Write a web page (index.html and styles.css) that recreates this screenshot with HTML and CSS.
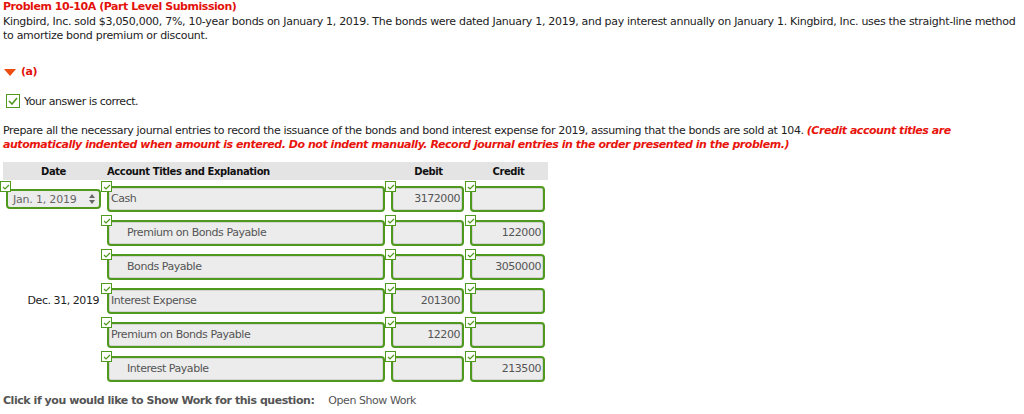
FILE: index.html
```html
<!DOCTYPE html>
<html>
<head>
<meta charset="utf-8">
<link rel="stylesheet" href="styles.css">
</head>
<body>
<div class="page">
  <h1 class="title">Problem 10-10A (Part Level Submission)</h1>
  <p class="prompt">Kingbird, Inc. sold $3,050,000, 7%, 10-year bonds on January 1, 2019. The bonds were dated January 1, 2019, and pay interest annually on January 1. Kingbird, Inc. uses the straight-line method to amortize bond premium or discount.</p>

  <div class="part"><span class="tri"></span><span class="part-label">(a)</span></div>

  <div class="correct">
    <span class="bigcheck"><svg width="10" height="8" viewBox="0 0 10 8"><path d="M1 4 L4 7 L9 1" fill="none" stroke="#4f9a1e" stroke-width="1.6"/></svg></span>
    <span>Your answer is correct.</span>
  </div>

  <p class="instr"><span class="instr-text">Prepare all the necessary journal entries to record the issuance of the bonds and bond interest expense for 2019, assuming that the bonds are sold at 104.</span> <em class="warn">(Credit account titles are automatically indented when amount is entered. Do not indent manually. Record journal entries in the order presented in the problem.)</em></p>

  <div class="thead">
    <div class="th th-date">Date</div>
    <div class="th th-acct">Account Titles and Explanation</div>
    <div class="th th-debit">Debit</div>
    <div class="th th-credit">Credit</div>
  </div>

  <div class="rows">
    <div class="row">
      <div class="cell c-date">
        <span class="badge"><svg width="8" height="6" viewBox="0 0 8 6"><path d="M1 3 L3 5 L7 1" fill="none" stroke="#4f9a1e" stroke-width="1.2"/></svg></span>
        <div class="select"><span>Jan. 1, 2019</span><span class="arrows"><svg width="6" height="10" viewBox="0 0 6 10"><path d="M0 4 L3 0 L6 4 Z M0 6 L3 10 L6 6 Z" fill="#666"/></svg></span></div>
      </div>
      <div class="cell c-acct">
        <span class="badge"><svg width="8" height="6" viewBox="0 0 8 6"><path d="M1 3 L3 5 L7 1" fill="none" stroke="#4f9a1e" stroke-width="1.2"/></svg></span>
        <div class="box acct">Cash</div>
      </div>
      <div class="cell c-debit">
        <span class="badge"><svg width="8" height="6" viewBox="0 0 8 6"><path d="M1 3 L3 5 L7 1" fill="none" stroke="#4f9a1e" stroke-width="1.2"/></svg></span>
        <div class="box num">3172000</div>
      </div>
      <div class="cell c-credit">
        <span class="badge"><svg width="8" height="6" viewBox="0 0 8 6"><path d="M1 3 L3 5 L7 1" fill="none" stroke="#4f9a1e" stroke-width="1.2"/></svg></span>
        <div class="box num"></div>
      </div>
    </div>

    <div class="row">
      <div class="cell c-date"></div>
      <div class="cell c-acct">
        <span class="badge"><svg width="8" height="6" viewBox="0 0 8 6"><path d="M1 3 L3 5 L7 1" fill="none" stroke="#4f9a1e" stroke-width="1.2"/></svg></span>
        <div class="box acct indent">Premium on Bonds Payable</div>
      </div>
      <div class="cell c-debit">
        <span class="badge"><svg width="8" height="6" viewBox="0 0 8 6"><path d="M1 3 L3 5 L7 1" fill="none" stroke="#4f9a1e" stroke-width="1.2"/></svg></span>
        <div class="box num"></div>
      </div>
      <div class="cell c-credit">
        <span class="badge"><svg width="8" height="6" viewBox="0 0 8 6"><path d="M1 3 L3 5 L7 1" fill="none" stroke="#4f9a1e" stroke-width="1.2"/></svg></span>
        <div class="box num">122000</div>
      </div>
    </div>

    <div class="row">
      <div class="cell c-date"></div>
      <div class="cell c-acct">
        <span class="badge"><svg width="8" height="6" viewBox="0 0 8 6"><path d="M1 3 L3 5 L7 1" fill="none" stroke="#4f9a1e" stroke-width="1.2"/></svg></span>
        <div class="box acct indent">Bonds Payable</div>
      </div>
      <div class="cell c-debit">
        <span class="badge"><svg width="8" height="6" viewBox="0 0 8 6"><path d="M1 3 L3 5 L7 1" fill="none" stroke="#4f9a1e" stroke-width="1.2"/></svg></span>
        <div class="box num"></div>
      </div>
      <div class="cell c-credit">
        <span class="badge"><svg width="8" height="6" viewBox="0 0 8 6"><path d="M1 3 L3 5 L7 1" fill="none" stroke="#4f9a1e" stroke-width="1.2"/></svg></span>
        <div class="box num">3050000</div>
      </div>
    </div>

    <div class="row">
      <div class="cell c-date"><div class="date-text">Dec. 31, 2019</div></div>
      <div class="cell c-acct">
        <span class="badge"><svg width="8" height="6" viewBox="0 0 8 6"><path d="M1 3 L3 5 L7 1" fill="none" stroke="#4f9a1e" stroke-width="1.2"/></svg></span>
        <div class="box acct">Interest Expense</div>
      </div>
      <div class="cell c-debit">
        <span class="badge"><svg width="8" height="6" viewBox="0 0 8 6"><path d="M1 3 L3 5 L7 1" fill="none" stroke="#4f9a1e" stroke-width="1.2"/></svg></span>
        <div class="box num">201300</div>
      </div>
      <div class="cell c-credit">
        <span class="badge"><svg width="8" height="6" viewBox="0 0 8 6"><path d="M1 3 L3 5 L7 1" fill="none" stroke="#4f9a1e" stroke-width="1.2"/></svg></span>
        <div class="box num"></div>
      </div>
    </div>

    <div class="row">
      <div class="cell c-date"></div>
      <div class="cell c-acct">
        <span class="badge"><svg width="8" height="6" viewBox="0 0 8 6"><path d="M1 3 L3 5 L7 1" fill="none" stroke="#4f9a1e" stroke-width="1.2"/></svg></span>
        <div class="box acct">Premium on Bonds Payable</div>
      </div>
      <div class="cell c-debit">
        <span class="badge"><svg width="8" height="6" viewBox="0 0 8 6"><path d="M1 3 L3 5 L7 1" fill="none" stroke="#4f9a1e" stroke-width="1.2"/></svg></span>
        <div class="box num">12200</div>
      </div>
      <div class="cell c-credit">
        <span class="badge"><svg width="8" height="6" viewBox="0 0 8 6"><path d="M1 3 L3 5 L7 1" fill="none" stroke="#4f9a1e" stroke-width="1.2"/></svg></span>
        <div class="box num"></div>
      </div>
    </div>

    <div class="row">
      <div class="cell c-date"></div>
      <div class="cell c-acct">
        <span class="badge"><svg width="8" height="6" viewBox="0 0 8 6"><path d="M1 3 L3 5 L7 1" fill="none" stroke="#4f9a1e" stroke-width="1.2"/></svg></span>
        <div class="box acct indent">Interest Payable</div>
      </div>
      <div class="cell c-debit">
        <span class="badge"><svg width="8" height="6" viewBox="0 0 8 6"><path d="M1 3 L3 5 L7 1" fill="none" stroke="#4f9a1e" stroke-width="1.2"/></svg></span>
        <div class="box num"></div>
      </div>
      <div class="cell c-credit">
        <span class="badge"><svg width="8" height="6" viewBox="0 0 8 6"><path d="M1 3 L3 5 L7 1" fill="none" stroke="#4f9a1e" stroke-width="1.2"/></svg></span>
        <div class="box num">213500</div>
      </div>
    </div>
  </div>

  <div class="footer">
    <span class="footer-label">Click if you would like to Show Work for this question:</span>
    <span class="footer-link">Open Show Work</span>
  </div>
</div>
</body>
</html>
```

FILE: styles.css
```css
html, body {
  margin: 0;
  padding: 0;
  background: #fff;
}
body {
  font-family: "DejaVu Sans", Verdana, sans-serif;
  font-size: 11px;
  letter-spacing: -0.45px;
  color: #222;
}
.page {
  width: 1020px;
  padding-left: 3px;
}
.title {
  margin: 0 0 2px 0;
  font-size: 11px;
  line-height: 13px;
  font-weight: bold;
  color: #e3120b;
}
.prompt {
  margin: 0;
  line-height: 14px;
  color: #222;
  letter-spacing: -0.3px;
}
.part {
  margin-top: 22px;
  height: 14px;
  line-height: 14px;
  display: flex;
  align-items: center;
  gap: 5px;
}
.tri {
  display: inline-block;
  width: 0;
  height: 0;
  margin-left: 1px;
  border-left: 6px solid transparent;
  border-right: 6px solid transparent;
  border-top: 7px solid #ee4b10;
}
.part-label {
  font-weight: bold;
  color: #e3120b;
}
.correct {
  margin-top: 15px;
  height: 14px;
  display: flex;
  align-items: center;
  gap: 4px;
  padding-left: 3px;
}
.bigcheck {
  width: 12px;
  height: 12px;
  border: 1px solid #4f9a1e;
  display: flex;
  align-items: center;
  justify-content: center;
  background: #fff;
}
.instr {
  margin: 16px 0 0 0;
  line-height: 14px;
  width: 975px;
}
.instr-text {
  letter-spacing: -0.36px;
}
.warn {
  color: #e8140c;
  font-weight: bold;
  font-style: italic;
}
.thead {
  margin-top: 10px;
  width: 545px;
  height: 18px;
  background: #e4e4e4;
  display: grid;
  grid-template-columns: 101px 284px 81px 79px;
  align-items: center;
  font-weight: bold;
  font-size: 10px;
  letter-spacing: -0.4px;
  color: #111;
}
.th-date, .th-debit, .th-credit {
  text-align: center;
}
.th-acct {
  padding-left: 3px;
}
.rows {
  margin-left: -3px;
}
.row {
  display: grid;
  grid-template-columns: 101px 284px 80px 83px;
  height: 34px;
}
.cell {
  position: relative;
}
.badge {
  position: absolute;
  left: 0;
  top: 1px;
  width: 9px;
  height: 9px;
  border: 1px solid #4f9a1e;
  background: #fff;
  display: flex;
  align-items: center;
  justify-content: center;
  z-index: 2;
}
.box {
  box-sizing: border-box;
  margin-top: 6px;
  height: 26px;
  border: 2px solid #4f9a1e;
  border-radius: 4px;
  background: #ececec;
  box-shadow: inset 0 0 0 1px #d4d4d4;
  line-height: 22px;
  color: #555;
  white-space: nowrap;
  overflow: hidden;
}
.c-acct .box {
  margin-left: 6px;
  width: 278px;
  padding-left: 2px;
}
.c-acct .box.indent {
  padding-left: 18px;
}
.c-debit .box {
  margin-left: 6px;
  width: 73px;
}
.c-credit .box {
  margin-left: 5px;
  width: 75px;
}
.num {
  text-align: right;
  padding-right: 2px;
}
.select {
  box-sizing: border-box;
  margin: 9px 0 0 6px;
  width: 95px;
  height: 20px;
  border: 2px solid #4f9a1e;
  border-radius: 4px;
  background: #ececec;
  display: flex;
  align-items: center;
  justify-content: space-between;
  padding: 0 4px 0 5px;
  color: #666;
  letter-spacing: -0.2px;
}
.arrows {
  display: flex;
  align-items: center;
}
.date-text {
  text-align: right;
  padding-right: 2px;
  margin-top: 12px;
  line-height: 14px;
  color: #222;
}
.footer {
  margin-top: 10px;
  line-height: 14px;
  display: flex;
  color: #555;
}
.footer-label {
  font-weight: bold;
  color: #555;
}
.footer-link {
  margin-left: 14px;
  color: #555;
}
```
